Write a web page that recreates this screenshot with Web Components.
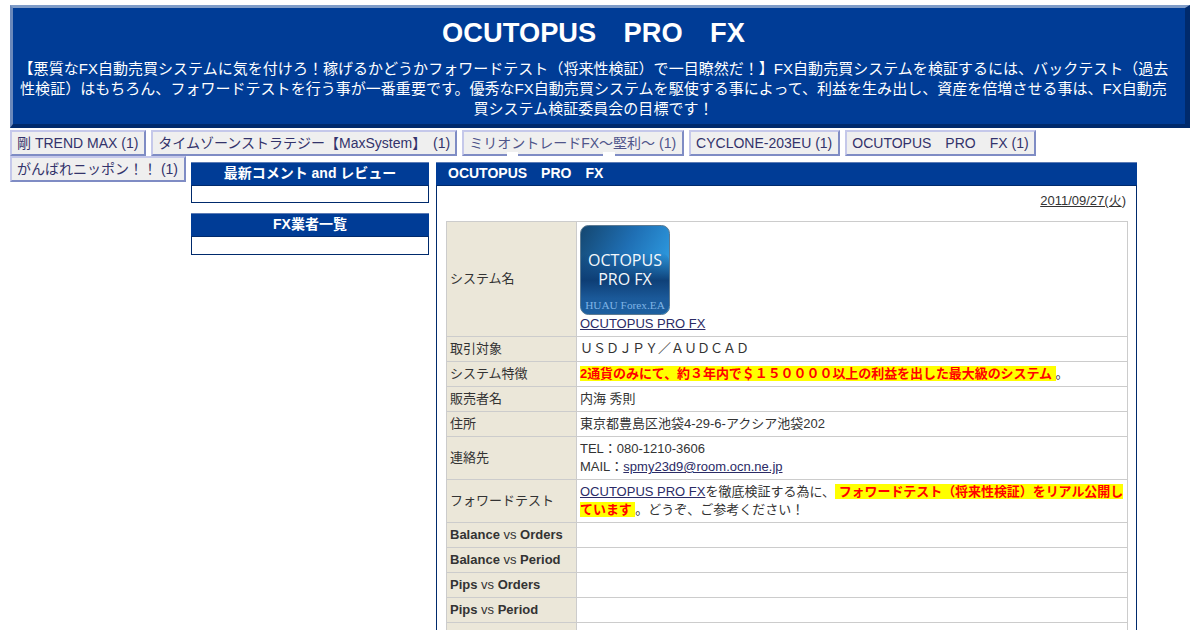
<!DOCTYPE html>
<html lang="ja">
<head>
<meta charset="utf-8">
<title>OCUTOPUS PRO FX</title>
<style>
html{overflow:hidden}
body{margin:5px 10px 0;background:#fff;color:#333;font:13px/18px "Liberation Sans","Noto Sans CJK JP",sans-serif}
</style>
</head>
<body>
<page-shell>
    <site-header slot="header" heading="OCUTOPUS　PRO　FX">【悪質なFX自動売買システムに気を付けろ！稼げるかどうかフォワードテスト（将来性検証）で一目瞭然だ！】FX自動売買システムを検証するには、バックテスト（過去性検証）はもちろん、フォワードテストを行う事が一番重要です。優秀なFX自動売買システムを駆使する事によって、利益を生み出し、資産を倍増させる事は、FX自動売買システム検証委員会の目標です！</site-header>
    <nav-tab style="padding-right:6px">剛 TREND MAX (1)</nav-tab>
    <nav-tab style="word-spacing:3px">タイムゾーンストラテジー【MaxSystem】 (1)</nav-tab>
    <nav-tab smudged style="padding-right:6px">ミリオントレードFX～堅利～ (1)</nav-tab>
    <nav-tab style="padding-right:6px">CYCLONE-203EU (1)</nav-tab>
    <nav-tab>OCUTOPUS　PRO　FX (1)</nav-tab>
    <nav-tab style="padding-right:6px">がんばれニッポン！！ (1)</nav-tab>
    <main-area>
        <side-box slot="side" heading="最新コメント and レビュー"></side-box>
        <side-box slot="side" heading="FX業者一覧" style="padding-bottom:17px"></side-box>
        <article-panel heading="OCUTOPUS　PRO　FX" date="2011/09/27(火)">
            <info-row label="システム名"><ea-logo></ea-logo><a href="#">OCUTOPUS PRO FX</a></info-row>
            <info-row label="取引対象">ＵＳＤＪＰＹ／ＡＵＤＣＡＤ</info-row>
            <info-row label="システム特徴"><mark-text>2通貨のみにて、約３年内で＄１５００００以上の利益を出した最大級のシステム</mark-text>。</info-row>
            <info-row label="販売者名">内海 秀則</info-row>
            <info-row label="住所">東京都豊島区池袋4-29-6-アクシア池袋202</info-row>
            <info-row label="連絡先">TEL：080-1210-3606<br>MAIL：<a href="#">spmy23d9@room.ocn.ne.jp</a></info-row>
            <info-row label="フォワードテスト"><a href="#">OCUTOPUS PRO FX</a>を徹底検証する為に、<mark-text>フォワードテスト（将来性検証）をリアル公開しています</mark-text>。どうぞ、ご参考ください！</info-row>
            <info-row><b slot="label">Balance</b><span slot="label"> vs </span><b slot="label">Orders</b></info-row>
            <info-row><b slot="label">Balance</b><span slot="label"> vs </span><b slot="label">Period</b></info-row>
            <info-row><b slot="label">Pips</b><span slot="label"> vs </span><b slot="label">Orders</b></info-row>
            <info-row><b slot="label">Pips</b><span slot="label"> vs </span><b slot="label">Period</b></info-row>
            <info-row label=" "></info-row>
        </article-panel>
    </main-area>
</page-shell>
<script>
class PageShell extends HTMLElement{
    constructor(){
        super()
        this.attachShadow({mode:"open"}).innerHTML = `
        <style>
        :host{display:block}
        </style>
        <slot name="header"></slot>
        <slot></slot>
        `
    }
}
customElements.define('page-shell',PageShell)

class SiteHeader extends HTMLElement{
    constructor(){
        super()
        this.attachShadow({mode:"open"}).innerHTML = `
        <style>
        :host{
            display:block;
            background:#003c96;
            color:#fff;
            text-align:center;
            border-style:solid;
            border-width:3px 5px 4px 3px;
            border-color:#7f9cc8 #002a6c #002a6c #6a88bb;
            padding:10px 15px 5px 4px;
            font-size:15px;
            line-height:20px;
            letter-spacing:.03px;
        }
        h1{margin:0 0 11px;font-size:27.25px;line-height:30px;font-weight:bold}
        </style>
        <h1></h1>
        <div><slot></slot></div>
        `
        this.shadowRoot.querySelector('h1').textContent = this.getAttribute('heading')
    }
}
customElements.define('site-header',SiteHeader)

class NavTab extends HTMLElement{
    constructor(){
        super()
        this.attachShadow({mode:"open"}).innerHTML = `
        <style>
        :host{
            display:block;
            float:left;
            position:relative;
            margin:2px 5px 0 0;
            padding:2px 5px;
            background:#efefef;
            color:#33336b;
            font-size:14px;
            line-height:18px;
            border:2px solid;
            border-color:#c5c8ea #7f8cc4 #7f8cc4 #c5c8ea;
            white-space:nowrap;
        }
        :host(:nth-of-type(6)){margin-top:0}
        :host([smudged]){color:#50558a}
        :host([smudged])::after{
            content:"";
            position:absolute;
            left:43px;
            bottom:-2px;
            width:108px;
            height:4px;
            background:linear-gradient(90deg,#fff 0 11px,transparent 11px 96px,#fff 96px 108px);
        }
        </style>
        <slot></slot>
        `
    }
}
customElements.define('nav-tab',NavTab)

class MainArea extends HTMLElement{
    constructor(){
        super()
        this.attachShadow({mode:"open"}).innerHTML = `
        <style>
        :host{
            display:flex;
            gap:7px;
            width:946px;
            overflow:hidden;
            padding-top:6px;
            box-sizing:border-box;
        }
        .side{width:238px;flex:none;display:flex;flex-direction:column;gap:10px}
        .body{flex:1;min-width:0}
        </style>
        <div class="side"><slot name="side"></slot></div>
        <div class="body"><slot></slot></div>
        `
    }
}
customElements.define('main-area',MainArea)

class SideBox extends HTMLElement{
    constructor(){
        super()
        this.attachShadow({mode:"open"}).innerHTML = `
        <style>
        :host{display:block;border:1px solid #002a6c;border-top:0;padding-bottom:16px}
        h2{
            margin:0 -1px;
            padding-bottom:2px;
            background:#003c96;
            color:#fff;
            font-size:14px;
            line-height:20px;
            text-align:center;
            border-top:1px solid #5b7bb5;
            border-bottom:1px solid #002a6c;
        }
        </style>
        <h2></h2>
        `
        this.shadowRoot.querySelector('h2').textContent = this.getAttribute('heading')
    }
}
customElements.define('side-box',SideBox)

class ArticlePanel extends HTMLElement{
    constructor(){
        super()
        this.attachShadow({mode:"open"}).innerHTML = `
        <style>
        :host{display:block;border:solid #002a6c;border-width:0 1px 1px}
        h2{
            margin:0 -1px;
            padding:0 11px 2px 12px;
            background:#003c96;
            color:#fff;
            font-size:14px;
            line-height:20px;
            border-top:1px solid #5b7bb5;
            border-bottom:1px solid #002a6c;
        }
        .date{text-align:right;padding:6px 10px 11px 0;color:#333}
        .date span{text-decoration:underline}
        .rows{margin:0 8px 40px 9px;border:solid #ccc;border-width:1px 1px 0 1px}
        </style>
        <h2></h2>
        <div class="date"><span></span>)</div>
        <div class="rows"><slot></slot></div>
        `
        this.shadowRoot.querySelector('h2').textContent = this.getAttribute('heading')
        this.shadowRoot.querySelector('.date span').textContent = this.getAttribute('date').slice(0,-1)
    }
}
customElements.define('article-panel',ArticlePanel)

class InfoRow extends HTMLElement{
    constructor(){
        super()
        this.attachShadow({mode:"open"}).innerHTML = `
        <style>
        :host{display:flex;border-bottom:1px solid #ccc}
        .label{
            width:123px;
            flex:none;
            padding:3px;
            background:#ebe7d9;
            border-right:1px solid #ccc;
            display:flex;
            align-items:center;
        }
        .label span{white-space:pre-wrap}
        .value{flex:1;padding:3px;min-height:18px;min-width:0}
        ::slotted(a){color:#2b2b66}
        </style>
        <div class="label"><span><span id="text"></span><slot name="label"></slot></span></div>
        <div class="value"><slot></slot></div>
        `
        this.shadowRoot.getElementById('text').textContent = this.getAttribute('label') || ''
    }
}
customElements.define('info-row',InfoRow)

class MarkText extends HTMLElement{
    constructor(){
        super()
        this.attachShadow({mode:"open"}).innerHTML = `
        <style>
        :host{display:inline;background:#ff0;color:#f00;font-weight:bold;letter-spacing:-.06px}
        </style>
        <slot></slot>
        `
    }
}
customElements.define('mark-text',MarkText)

class EaLogo extends HTMLElement{
    constructor(){
        super()
        this.attachShadow({mode:"open"}).innerHTML = `
        <style>
        :host{display:block;width:90px;height:90px}
        svg{display:block}
        </style>
        <svg width="90" height="90" viewBox="0 0 90 90">
            <defs>
                <linearGradient id="bg" x1="0" y1="0" x2="1" y2="0.55">
                    <stop offset="0" stop-color="#14466f"/>
                    <stop offset="0.5" stop-color="#1f6fb4"/>
                    <stop offset="1" stop-color="#2fa0e6"/>
                </linearGradient>
                <linearGradient id="low" x1="0" y1="0" x2="0" y2="1">
                    <stop offset="0" stop-color="#0c3a70" stop-opacity="0"/>
                    <stop offset="0.45" stop-color="#0d3c73" stop-opacity=".95"/>
                    <stop offset="0.75" stop-color="#1b5a9a"/>
                    <stop offset="1" stop-color="#1d5f9f"/>
                </linearGradient>
            </defs>
            <rect x="0.5" y="0.5" width="89" height="89" rx="8" fill="url(#bg)" stroke="#5c7a92"/>
            <rect x="1" y="28" width="88" height="61" rx="8" fill="url(#low)"/>
            <g fill="#f4f8fc" font-family="'Open Sans','Liberation Sans',sans-serif" font-size="16" text-anchor="middle">
                <text x="45" y="40.5">OCTOPUS</text>
                <text x="45" y="60">PRO FX</text>
            </g>
            <text x="45" y="84" fill="#7fb4e6" font-family="'Liberation Serif',serif" font-size="11.3" text-anchor="middle">HUAU Forex.EA</text>
        </svg>
        `
    }
}
customElements.define('ea-logo',EaLogo)
</script>
</body>
</html>
